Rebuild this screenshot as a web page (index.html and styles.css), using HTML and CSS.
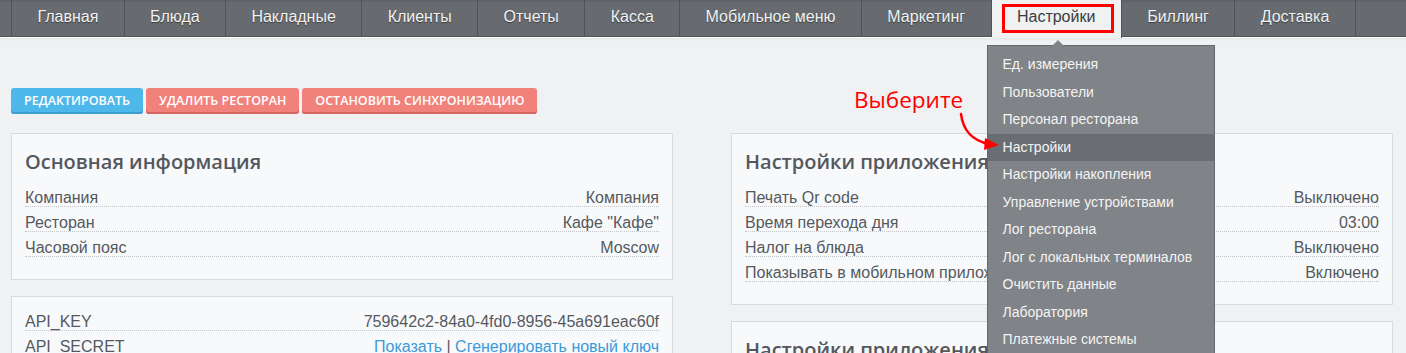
FILE: index.html
```html
<!DOCTYPE html>
<html lang="ru">
<head>
    <meta charset="UTF-8">
    <meta name="viewport" content="width=device-width, initial-scale=1.0">
    <title>Ресторан</title>
    <link rel="stylesheet" href="styles.css">
</head>
<body>

<nav class="topnav">
    <ul class="topnav-list">
        <li class="topnav-item"><a href="#">Главная</a></li>
        <li class="topnav-item"><a href="#">Блюда</a></li>
        <li class="topnav-item"><a href="#">Накладные</a></li>
        <li class="topnav-item"><a href="#">Клиенты</a></li>
        <li class="topnav-item"><a href="#">Отчеты</a></li>
        <li class="topnav-item"><a href="#">Касса</a></li>
        <li class="topnav-item"><a href="#">Мобильное меню</a></li>
        <li class="topnav-item"><a href="#">Маркетинг</a></li>
        <li class="topnav-item is-active">
            <a href="#">Настройки</a>
            <span class="mark"></span>
            <ul class="dropdown">
                <li><a href="#">Ед. измерения</a></li>
                <li><a href="#">Пользователи</a></li>
                <li><a href="#">Персонал ресторана</a></li>
                <li class="is-hover"><a href="#">Настройки</a></li>
                <li><a href="#">Настройки накопления</a></li>
                <li><a href="#">Управление устройствами</a></li>
                <li><a href="#">Лог ресторана</a></li>
                <li><a href="#">Лог с локальных терминалов</a></li>
                <li><a href="#">Очистить данные</a></li>
                <li><a href="#">Лаборатория</a></li>
                <li><a href="#">Платежные системы</a></li>
            </ul>
        </li>
        <li class="topnav-item"><a href="#">Биллинг</a></li>
        <li class="topnav-item"><a href="#">Доставка</a></li>
    </ul>
</nav>

<div class="page">
    <div class="actions">
        <button class="btn btn-blue">Редактировать</button>
        <button class="btn btn-red">Удалить ресторан</button>
        <button class="btn btn-red">Остановить синхронизацию</button>
    </div>

    <div class="columns">
        <div class="column">
            <div class="card">
                <h2 class="card-title">Основная информация</h2>
                <div class="row"><span>Компания</span><span>Компания</span></div>
                <div class="row"><span>Ресторан</span><span>Кафе "Кафе"</span></div>
                <div class="row"><span>Часовой пояс</span><span>Moscow</span></div>
            </div>
            <div class="card card-plain">
                <div class="row"><span>API_KEY</span><span>759642c2-84a0-4fd0-8956-45a691eac60f</span></div>
                <div class="row"><span>API_SECRET</span><span><a href="#">Показать</a> | <a href="#">Сгенерировать новый ключ</a></span></div>
            </div>
        </div>
        <div class="column">
            <div class="card">
                <h2 class="card-title">Настройки приложения</h2>
                <div class="row"><span>Печать Qr code</span><span>Выключено</span></div>
                <div class="row"><span>Время перехода дня</span><span>03:00</span></div>
                <div class="row"><span>Налог на блюда</span><span>Выключено</span></div>
                <div class="row"><span>Показывать в мобильном приложении</span><span>Включено</span></div>
            </div>
            <div class="card">
                <h2 class="card-title">Настройки приложения</h2>
            </div>
        </div>
    </div>
</div>

<!-- annotation -->
<div class="hint">Выберите</div>
<svg class="hint-arrow" width="50" height="50" viewBox="0 0 50 50">
    <path d="M6 4 C8 20 16 30 34 34" fill="none" stroke="#ff0000" stroke-width="2.5" stroke-linecap="round"/>
    <path d="M30 28 L44 35 L29 40 Z" fill="#ff0000"/>
</svg>

</body>
</html>
```

FILE: styles.css
```css
body {
    margin: 0;
    background-color: #f0f1f3;
    font-family: "Liberation Sans", Arial, sans-serif;
    position: relative;
    overflow: hidden;
    height: 353px;
}
a {
    text-decoration: none;
}
.topnav {
    height: 36px;
    background: linear-gradient(#5c6064, #676b6f 3px);
    border-bottom: 1px solid #4f5357;
    box-shadow: 0 1px 0 #ffffff, 0 2px 3px rgba(0, 0, 0, 0.06);
}
.topnav-list {
    list-style: none;
    margin: 0;
    padding: 0 0 0 11px;
    display: flex;
    height: 36px;
}
.topnav-item {
    position: relative;
    border-right: 1px solid #4f5357;
}
.topnav-item:first-child {
    border-left: 1px solid #4f5357;
}
.topnav-item > a {
    display: block;
    padding: 0 25.4px;
    line-height: 34px;
    font-size: 16px;
    color: #f2f2f2;
    text-shadow: 0 1px 1px rgba(0, 0, 0, 0.45);
}
.topnav-item.is-active {
    background-color: #f0f1f1;
    height: 38px;
}
.topnav-item.is-active > a {
    color: #3a3d40;
    text-shadow: none;
}
.mark {
    position: absolute;
    top: 4px;
    left: 10px;
    right: 7px;
    height: 23px;
    border: 3px solid #ff0000;
}
.dropdown {
    position: absolute;
    top: 45px;
    left: -5px;
    width: 226px;
    margin: 0;
    padding: 5px 0 0;
    list-style: none;
    background-color: #808387;
    border: 1px solid #64686c;
    z-index: 5;
}
.dropdown::before {
    content: "";
    position: absolute;
    top: -6px;
    left: 64px;
    border-left: 6px solid transparent;
    border-right: 6px solid transparent;
    border-bottom: 6px solid #808387;
}
.dropdown li a {
    display: block;
    padding: 0 15px;
    line-height: 27.5px;
    font-size: 14px;
    color: #f4f4f4;
}
.dropdown li.is-hover {
    background-color: #6a6e72;
}
.page {
    padding: 51px 13px 0 11px;
}
.actions {
    display: flex;
    gap: 2px;
    margin-bottom: 19px;
}
.btn {
    font-family: "Open Sans", sans-serif;
    font-weight: 600;
    font-size: 12.5px;
    text-transform: uppercase;
    color: #ffffff;
    border: none;
    border-radius: 3px;
    padding: 0 13px;
    height: 26px;
    line-height: 24px;
    cursor: pointer;
}
.btn-blue {
    background-color: #4fb8ea;
    box-shadow: inset 0 -2px 0 #3b9fcf;
}
.btn-red {
    background-color: #f1817b;
    margin-left: 1px;
    box-shadow: inset 0 -2px 0 #d5655f;
}
.columns {
    display: grid;
    grid-template-columns: 1fr 1fr;
    column-gap: 58px;
}
.card {
    background-color: #f8f9fb;
    border: 1px solid #d8dadd;
    padding: 16px 13px 22px;
    margin-bottom: 16px;
}
.card-plain {
    padding-top: 9px;
}
.card-title {
    margin: 0 0 8px;
    font-family: "Open Sans", sans-serif;
    font-weight: 600;
    font-size: 20px;
    line-height: 24px;
    color: #54585d;
}
.row {
    display: flex;
    justify-content: space-between;
    padding-top: 8px;
    line-height: 16px;
    font-size: 16px;
    color: #55595e;
    border-bottom: 1px dotted #c4c6c9;
}
.row a {
    color: #3b9ad8;
}
.hint {
    position: absolute;
    left: 854px;
    top: 84px;
    font-family: "Open Sans", sans-serif;
    font-size: 22.5px;
    color: #ff0000;
}
.hint-arrow {
    position: absolute;
    left: 955px;
    top: 110px;
    z-index: 10;
}
```
